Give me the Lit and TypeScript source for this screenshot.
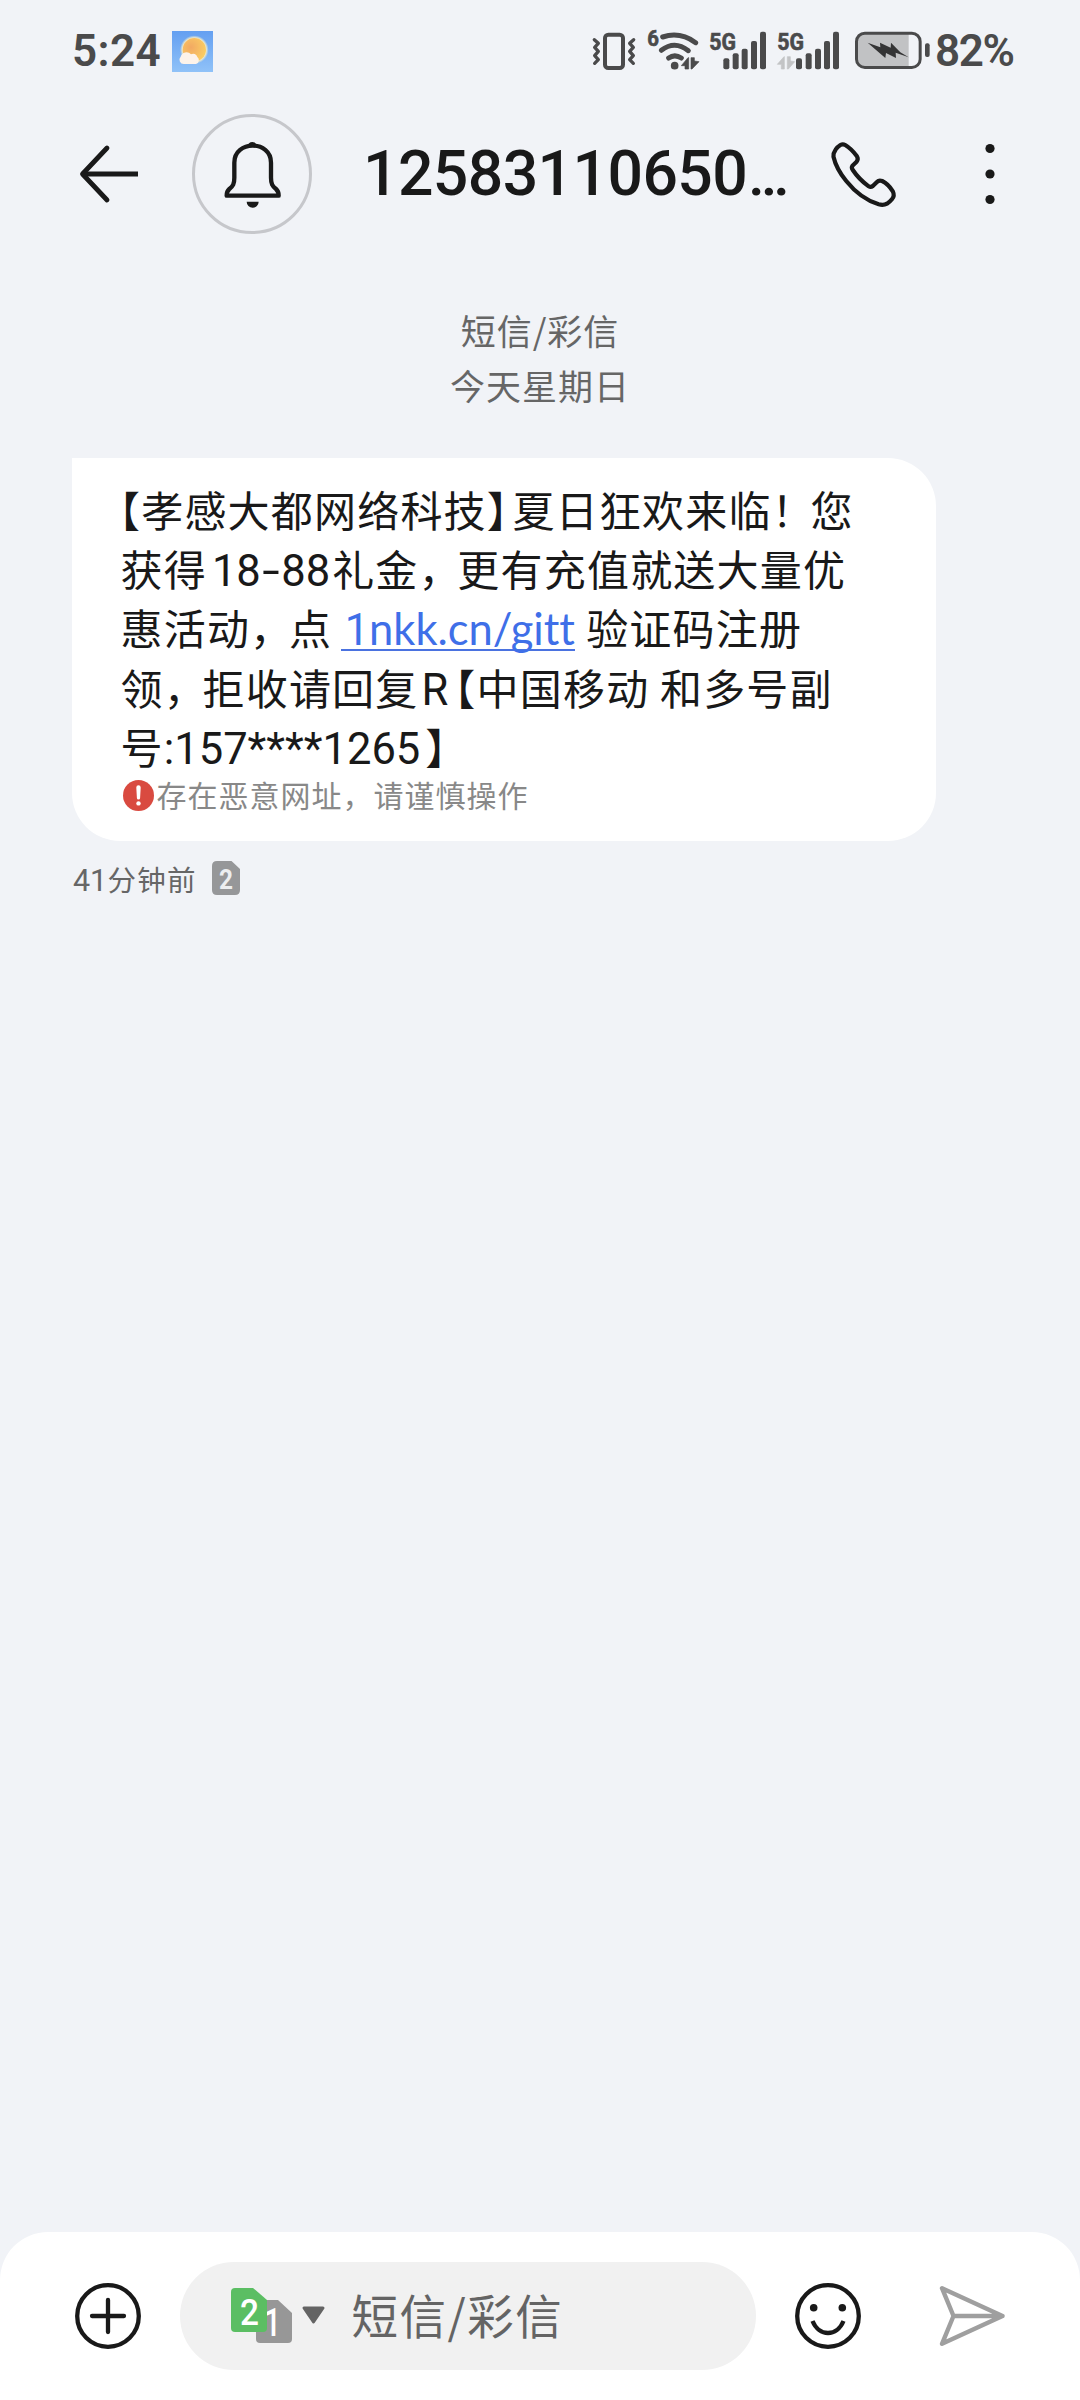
import { LitElement, html, css, svg } from "lit";
import { customElement, property } from "lit/decorators.js";

const INK = "#191919";
const STATUS = "#4a4a4b";

/** Heights and left edges of a five-step signal meter. */
const bars = (xs: number[]) =>
  [145, 130, 116, 93, 65].map(
    (y, i) => svg`<rect x=${xs[i]} y=${y} width="18" height=${178 - y} rx="6" fill=${STATUS} />`
  );

@customElement("status-bar")
class StatusBar extends LitElement {
  static styles = css`
    :host { display: block; }
    .bar { display: flex; align-items: center; height: 102px; padding: 0 67px 0 72px; color: #4a4a4b; font-family: Roboto, sans-serif; font-weight: 600; font-size: 44px; line-height: 52px; }
    .time { width: 100px; letter-spacing: 0.4px; white-space: nowrap; }
    .weather { width: 41px; height: 41px; display: block; }
    .spacer { flex: 1; }
    .icons { display: flex; gap: 8px; align-items: center; }
    .icons svg { display: block; }
    .battery { margin-left: 5px; }
    .level { width: 78px; margin-left: 4px; letter-spacing: -1.4px; white-space: nowrap; }
    text { font-family: Roboto, sans-serif; font-weight: 700; stroke: #4a4a4b; stroke-width: 2; }
  `;
  render() {
    return html`<div class="bar">
      <span class="time">5:24</span>
      <svg class="weather" viewBox="0 0 123 123">
        <defs>
          <linearGradient id="sky" x1="0" y1="0" x2="0" y2="1"><stop offset="0" stop-color="#649ff1" /><stop offset="1" stop-color="#90c2f8" /></linearGradient>
          <radialGradient id="sun" cx=".35" cy=".4" r=".7"><stop offset="0" stop-color="#f2a963" /><stop offset="1" stop-color="#fbcf63" /></radialGradient>
          <radialGradient id="glow"><stop offset=".8" stop-color="#fff3c8" /><stop offset="1" stop-color="#fff3c8" stop-opacity="0" /></radialGradient>
        </defs>
        <rect width="123" height="123" fill="url(#sky)" />
        <circle cx="67" cy="56" r="43" fill="url(#glow)" />
        <circle cx="67" cy="56" r="35" fill="url(#sun)" />
        <path d="M36 99 a13 13 0 0 1 -10 -22 a18 18 0 0 1 31 -7 a13 13 0 0 1 19 8 a12 12 0 0 1 -4 21z" fill="#fdf3ea" />
      </svg>
      <span class="spacer"></span>
      <div class="icons">
        <svg width="48" height="52" viewBox="60 45 144 156" fill="none" stroke=${STATUS}>
          <rect x="105" y="74" width="54" height="100" rx="10" stroke-width="12" />
          <path d="M73 89L85 100L74 112L85 124L74 137L85 149L74 160M191 89L179 100L190 112L179 124L190 137L179 149L190 160" stroke-width="10" stroke-linecap="round" stroke-linejoin="round" />
        </svg>
        <svg width="54" height="52" viewBox="228 45 162 156">
          <text x="232" y="109" font-size="68" textLength="35" lengthAdjust="spacingAndGlyphs" fill=${STATUS}>6</text>
          <g fill="none" stroke=${STATUS} stroke-width="15" stroke-linecap="round">
            <path d="M278 81Q330 64 377 98" /><path d="M274 121Q314 90 355 122" /><path d="M296 144Q314 131 334 144" />
          </g>
          <circle cx="314" cy="167" r="11.500" fill=${STATUS} />
          <path d="M354 143L334 167H345V177H356V143ZM363 143H373V153L387 155L366 177H363Z" fill=${STATUS} stroke=${STATUS} stroke-width="2" stroke-linejoin="round" />
        </svg>
        <svg width="60" height="52" viewBox="414 45 180 156">
          <text x="418" y="120" font-size="73" textLength="80" lengthAdjust="spacingAndGlyphs" fill=${STATUS}>5G</text>
          ${bars([460, 488, 515, 543, 570])}
        </svg>
        <svg width="64" height="52" viewBox="618 45 192 156">
          <text x="622" y="120" font-size="73" textLength="80" lengthAdjust="spacingAndGlyphs" fill=${STATUS}>5G</text>
          <path d="M642 140L622 163H634V177H643V140ZM652 140H661V153L674 155L655 177H652Z" fill="#c3c4c6" stroke="#c3c4c6" stroke-width="2" stroke-linejoin="round" />
          ${bars([678, 707, 735, 762, 789])}
        </svg>
        <svg class="battery" width="78" height="52" viewBox="159 45 234 156">
          <path d="M192 72H326V170H192Q172 170 172 150V92Q172 72 192 72Z" fill="#c1c2c4" />
          <rect x="169.500" y="69.500" width="191" height="103" rx="25" fill="none" stroke=${STATUS} stroke-width="9" />
          <rect x="375" y="100" width="14" height="41" rx="6" fill=${STATUS} />
          <path d="M203 98L241 112L240 98L272 113L273 98L301 127L326 142L287 128L288 144L258 129L256 144Z" fill="#343435" />
        </svg>
      </div>
      <span class="level">82%</span>
    </div>`;
  }
}

@customElement("chat-header")
class ChatHeader extends LitElement {
  static styles = css`
    :host { display: block; }
    .row { display: flex; align-items: center; height: 144px; padding-left: 76px; }
    svg { display: block; }
    .bell { box-sizing: border-box; width: 120px; height: 120px; margin-left: 50px; border: 3px solid #c6c7cb; border-radius: 50%; display: grid; place-items: center; }
    .title { margin: 2px 0 0 51px; width: 465px; font: 500 62.5px/72px Roboto, sans-serif; letter-spacing: -0.6px; color: #191919; white-space: nowrap; }
    .dots { font-size: 56px; font-weight: 600; letter-spacing: 0; margin-left: 1px; }
    .phone { width: 69px; height: 70px; margin-left: 1px; }
    .more { margin-left: 84px; }
  `;
  render() {
    return html`<div class="row">
      <svg width="66" height="66" viewBox="0 0 66 66" fill="none" stroke=${INK} stroke-width="4.800" stroke-linecap="round" stroke-linejoin="round">
        <path d="M31 7L6.500 33L31 59" /><path d="M7 33H62" stroke-linecap="butt" />
      </svg>
      <div class="bell">
        <svg width="60" height="72" viewBox="514 114 180 216">
          <path d="M551 188C551 120 661 120 661 188V233C661 252 665 258 676 267Q684 274 684 287H528Q528 274 536 267C547 258 551 252 551 233Z" fill="none" stroke=${INK} stroke-width="13" stroke-linejoin="round" />
          <path d="M593 138a12 12 0 0 1 24 0zM588 305H624a18 18 0 0 1 -36 0z" fill=${INK} />
        </svg>
      </div>
      <h1 class="title">12583110650<span class="dots">…</span></h1>
      <svg class="phone" viewBox="840 115 200 210" preserveAspectRatio="none" fill="none" stroke=${INK}>
        <path stroke-width="4.200" vector-effect="non-scaling-stroke" stroke-linejoin="round" d="M887 133Q905 144 921 167Q926 175 920 183L908 195Q904 201 909 208Q927 236 955 257Q961 261 967 256L979 244Q985 237 994 241Q1012 250 1025 272Q1031 285 1023 295Q1017 303 1008 309Q998 315 984 311Q931 294 890 241Q861 204 853 168Q852 157 859 147Q865 138 873 133Q880 129 887 133Z" />
      </svg>
      <svg class="more" width="16" height="66" viewBox="0 0 16 66" fill=${INK}>
        <circle cx="8" cy="7.500" r="4.600" /><circle cx="8" cy="33" r="4.600" /><circle cx="8" cy="58.500" r="4.600" />
      </svg>
    </div>`;
  }
}

@customElement("message-thread")
class MessageThread extends LitElement {
  static styles = css`
    :host { display: block; font-family: "Noto Sans CJK SC", sans-serif; }
    .date { margin-top: 56px; text-align: center; font-size: 35px; line-height: 55px; letter-spacing: 1px; color: #666; }
    .bubble { box-sizing: border-box; width: 864px; height: 383px; margin: 46px 0 0 72px; padding: 21px 0 0 48.5px; background: #fff; border-radius: 0 48px 48px 48px; color: #191919; }
    .line { height: 59.2px; line-height: 59.2px; font-size: 42px; letter-spacing: 1.2px; white-space: pre; }
    .num { font-family: Roboto, sans-serif; font-size: 43.5px; line-height: 0; letter-spacing: 0; }
    .half { font-feature-settings: "halt"; }
    .first { margin-left: -1.5px; }
    .close { margin-right: 3.5px; }
    .last { margin-left: 5px; }
    .tight { margin-right: -4.4px; }
    .range { margin: 0 2px 0 5px; }
    .dash { display: inline-block; line-height: 1; transform: scaleX(1.45); margin: 0 4.2px; }
    .letter { margin: 0 6px 0 3px; }
    .link { color: #3f6fe8; display: inline-block; width: 230px; height: 41px; padding-left: 4px; margin: 0 11.5px 0 8.5px; line-height: 41px; font-family: Lato, sans-serif; font-variant-ligatures: none; border-bottom: 2px solid #4a72e0; box-sizing: content-box; }
    .one { font-family: Roboto, sans-serif; font-size: 43.5px; }
    .warn { display: flex; align-items: center; height: 40px; font-size: 30px; letter-spacing: 1px; color: #888; padding-left: 2px; white-space: nowrap; }
    .warn svg { display: block; margin: 1px 3px 0 0; }
    .notice { margin-top: -1px; }
    .meta { display: flex; align-items: center; height: 44px; margin: 15px 0 0 73px; font-size: 28.5px; letter-spacing: 1.3px; color: #666; }
    .ago { width: 139px; white-space: nowrap; }
    .ago .num { font-size: 30.5px; letter-spacing: -0.2px; margin-right: 0.5px; }
    .meta svg { display: block; }
    text { font-family: Roboto, sans-serif; font-weight: 700; letter-spacing: 0; }
  `;
  render() {
    return html`
      <div class="date"><div>短信/彩信</div><div>今天星期日</div></div>
      <div class="bubble">
        <div class="line"><span class="half first">【</span>孝感大都网络科技<span class="half close">】</span>夏日狂欢来临<span class="tight">！</span>您</div>
        <div class="line">获得<span class="num range">18<span class="dash">-</span>88</span>礼金<span class="tight">，</span>更有充值就送大量优</div>
        <div class="line">惠活动<span class="tight">，</span>点<span class="num link"><span class="one">1</span>nkk.cn/gitt</span>验证码注册</div>
        <div class="line">领<span class="tight">，</span>拒收请回复<span class="num letter">R</span><span class="half">【</span>中国移动 和多号副</div>
        <div class="line">号<span class="num">:157****1265</span><span class="half last">】</span></div>
        <div class="warn">
          <svg width="31" height="31" viewBox="0 0 31 31"><circle cx="15.500" cy="15.500" r="15.500" fill="#d94a40" /><path d="M13.300 7.500a2.200 2.200 0 0 1 4.400 0l-.6 10.500a1.600 1.600 0 0 1 -3.200 0z" fill="#fff" /><circle cx="15.500" cy="23.400" r="2.200" fill="#fff" /></svg>
          <span class="notice">存在恶意网址，请谨慎操作</span>
        </div>
      </div>
      <div class="meta">
        <span class="ago"><span class="num">41</span>分钟前</span>
        <svg width="28" height="34" viewBox="0 0 28 34"><path d="M5 0H19.500L28 8V29Q28 34 23 34H5Q0 34 0 29V5Q0 0 5 0Z" fill="#969799" /><text x="14" y="27.500" text-anchor="middle" font-size="28" textLength="14" lengthAdjust="spacingAndGlyphs" fill="#eceef0">2</text></svg>
      </div>`;
  }
}

@customElement("chat-composer")
class ChatComposer extends LitElement {
  @property() hint = "短信/彩信";
  static styles = css`
    :host { display: block; }
    .panel { box-sizing: border-box; display: flex; align-items: center; height: 168px; padding: 0 0 0 74px; background: #fff; border-radius: 48px 48px 0 0; }
    svg { display: block; }
    .field { box-sizing: border-box; display: flex; align-items: center; width: 576px; height: 108px; margin: 0 38px; padding-left: 51px; border-radius: 54px; background: #f1f1f1; }
    .hint { margin: -5px 0 0 24.5px; font: 46.5px/60px "Noto Sans CJK SC", sans-serif; letter-spacing: 1.5px; color: #646464; white-space: nowrap; }
    .send { margin-left: 70px; }
    text { font-family: Roboto, sans-serif; font-weight: 500; }
  `;
  render() {
    return html`<div class="panel">
      <svg width="68" height="68" viewBox="-34 -34 68 68" fill="none" stroke=${INK} stroke-width="4.300" stroke-linecap="round"><circle r="30.800" /><path d="M-16 0H16M0 -16V16" /></svg>
      <div class="field">
        <svg width="96" height="56" viewBox="0 0 96 56">
          <path d="M29 12H47L61 25V51Q61 55 57 55H29Q25 55 25 51V16Q25 12 29 12Z" fill="#979797" />
          <text x="33" y="48" font-size="38" fill="#fff" textLength="17" lengthAdjust="spacingAndGlyphs">1</text>
          <path d="M4 0H22L36 12V40Q36 44 32 44H4Q0 44 0 40V4Q0 0 4 0Z" fill="#5bbe63" />
          <text x="9" y="37" font-size="37" fill="#fff" textLength="19" lengthAdjust="spacingAndGlyphs">2</text>
          <path d="M73 20H92L82.500 34Z" fill="#646464" stroke="#646464" stroke-width="3" stroke-linejoin="round" />
        </svg>
        <span class="hint">${this.hint}</span>
      </div>
      <svg width="68" height="68" viewBox="-34 -34 68 68" fill="none" stroke=${INK} stroke-width="4.300">
        <circle r="30.800" /><path d="M-15.500 5C-9 21 9 21 15.500 5" /><g fill=${INK} stroke="none"><circle cx="-14.300" cy="-8.300" r="3.800" /><circle cx="14.300" cy="-8.300" r="3.800" /></g>
      </svg>
      <svg class="send" width="80" height="68" viewBox="-38 -34 80 68" fill="none" stroke="#9f9f9f" stroke-width="4.400" stroke-linecap="round" stroke-linejoin="round">
        <path d="M-28 -27.800L32.500 0L-28 27.800L-16.500 0ZM-16.500 0H32.500" />
      </svg>
    </div>`;
  }
}

@customElement("app-root")
class AppRoot extends LitElement {
  static styles = css`
    :host { display: block; }
    .screen { display: flex; flex-direction: column; width: 1080px; height: 2400px; background: #f1f3f7; overflow: hidden; }
    .thread { flex: 1; }
  `;
  render() {
    return html`<div class="screen">
      <status-bar></status-bar>
      <chat-header></chat-header>
      <message-thread class="thread"></message-thread>
      <chat-composer></chat-composer>
    </div>`;
  }
}
